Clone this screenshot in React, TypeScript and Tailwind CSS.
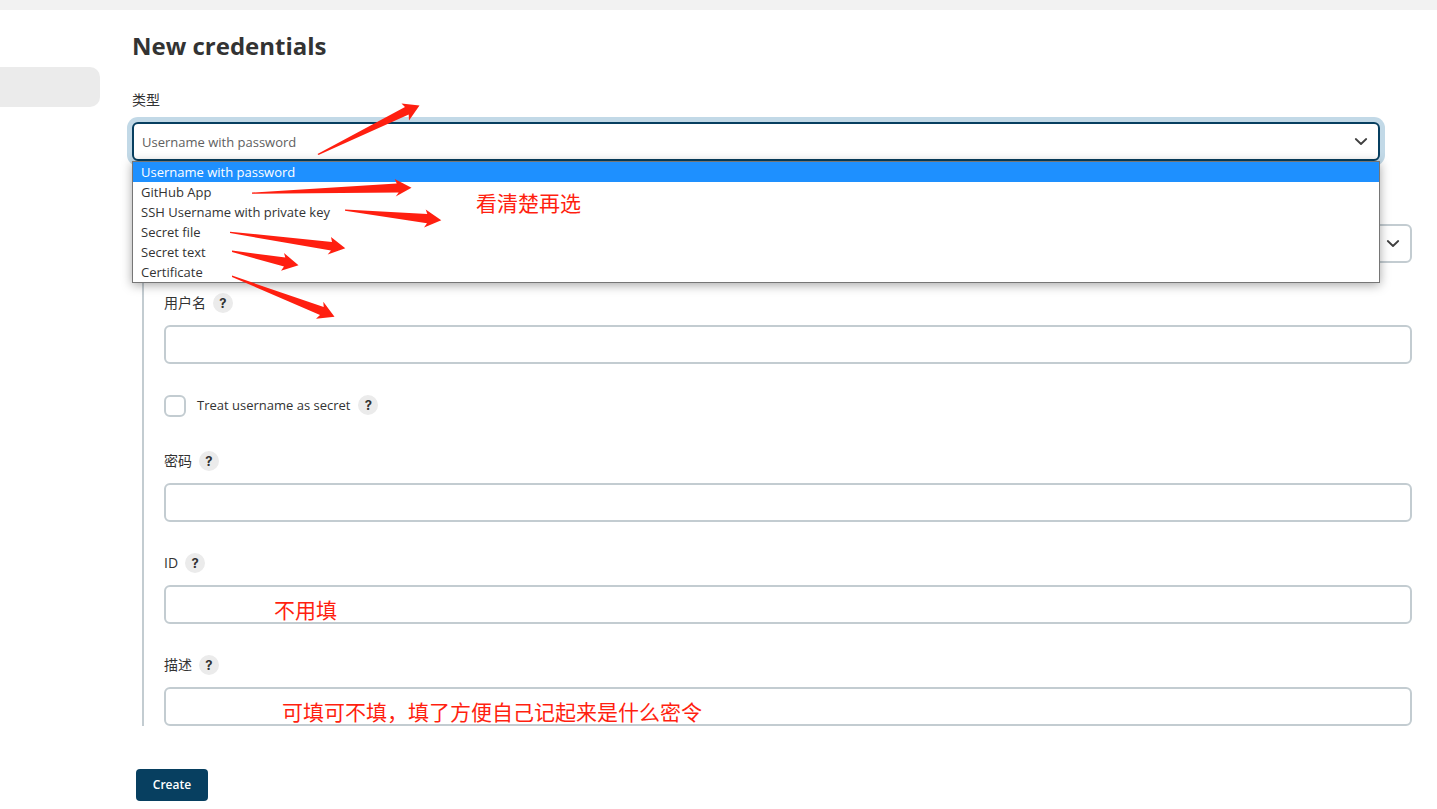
import { useState } from "react";

const CREDENTIAL_TYPES = [
  "Username with password",
  "GitHub App",
  "SSH Username with private key",
  "Secret file",
  "Secret text",
  "Certificate",
];

// tail, upper neck, upper barb, tip, lower barb, lower neck
const ARROWS = [
  "317.5,154 405,107 401.5,103.5 419.5,105.5 409,120.5 408.7,114.5 318.5,155",
  "252,192.6 396.7,183.5 394.7,179 411.5,187.7 395.7,196.5 398.7,192.5 252,193.8",
  "345,209.4 427.3,214 425.7,209.5 441.3,220.3 424,227.5 427,223.2 345,210.8",
  "230,231.7 332,242 331,237 345.3,248.3 327.7,254.5 331,250.5 230,233",
  "232,250.6 285.3,257.5 284,253 298.5,265.3 281,270.8 284,266.5 232,252",
  "232,275.6 323.7,307 323.3,301.8 334.5,316.7 316,318.8 320,315 232,277",
];

const Chevron = () => {
  return (
    <svg
      className="absolute right-3 top-4 pointer-events-none"
      width="14"
      height="8"
      viewBox="0 0 14 8"
      fill="none"
      stroke="#404040"
      strokeWidth="1.8"
      strokeLinecap="round"
      strokeLinejoin="round"
      aria-hidden="true"
    >
      <path d="M1.8 1l5.2 5 5.2-5" />
    </svg>
  );
};

const HelpButton = ({ label }: { label: string }) => {
  return (
    <button
      type="button"
      aria-label={`Help: ${label}`}
      className="flex items-center justify-center size-5 rounded-full bg-[#ebebeb] text-[#333333] font-['Inter',sans-serif] text-[13px] leading-5 font-bold"
    >
      ?
    </button>
  );
};

interface TextFieldProps {
  id: string;
  label: string;
  type?: string;
  note?: string;
  noteClassName?: string;
}

const TextField = ({ id, label, type = "text", note, noteClassName = "" }: TextFieldProps) => {
  const [value, setValue] = useState("");

  return (
    <div className="flex flex-col gap-3">
      <div className="flex items-center gap-[7px] h-5">
        <label htmlFor={id} className="leading-5">
          {label}
        </label>
        <HelpButton label={label} />
      </div>
      <div className="relative">
        <input
          id={id}
          type={type}
          value={value}
          onChange={(e) => setValue(e.target.value)}
          className="block w-full h-[39px] px-2 border-2 border-[#c3ccd1] rounded-md outline-0 bg-white"
        />
        {note && <Note className={`top-[9px] ${noteClassName}`}>{note}</Note>}
      </div>
    </div>
  );
};

const Note = ({ className, children }: { className: string; children: string }) => {
  return (
    <span
      className={`absolute text-[#ff1f10] text-[21px] leading-8 whitespace-nowrap pointer-events-none ${className}`}
    >
      {children}
    </span>
  );
};

const App = () => {
  const [type, setType] = useState(CREDENTIAL_TYPES[0]);
  const [secret, setSecret] = useState(false);

  return (
    <div className="relative min-h-screen bg-white text-[#333333] text-sm font-['Open_Sans','Noto_Sans_CJK_SC',sans-serif]">
      <div className="h-2.5 bg-[#f2f2f2]" />
      <div className="flex">
        <aside className="w-[100px] shrink-0 pt-[57px]">
          <div className="h-10 rounded-r-[10px] bg-[#ebebeb]" />
        </aside>

        <main className="grow min-w-0 pl-8 pr-[25px] pt-5 pb-2">
          <h1 className="text-2xl leading-8 font-bold">New credentials</h1>

          <form onSubmit={(e) => e.preventDefault()}>
            <div className="flex flex-col gap-3 mt-7 mr-8">
              <label htmlFor="type" className="h-5 leading-5">
                类型
              </label>
              <div className="relative">
                <select
                  id="type"
                  value={type}
                  onChange={(e) => setType(e.target.value)}
                  className="block w-full h-[39px] px-2 pt-0.5 appearance-none border-2 border-[#073f60] rounded-md outline-0 bg-white text-[#606060] text-[13px] shadow-[0_0_0_5px_#c2d9e7]"
                >
                  {CREDENTIAL_TYPES.map((name) => (
                    <option key={name}>{name}</option>
                  ))}
                </select>
                <Chevron />
                <ul
                  role="listbox"
                  aria-label="类型"
                  className="absolute z-10 top-full inset-x-0 border border-[#767676] bg-white text-[13px] shadow-[0_2px_10px_rgba(0,0,0,0.35)]"
                >
                  {CREDENTIAL_TYPES.map((name) => (
                    <li
                      key={name}
                      role="option"
                      aria-selected={name === type}
                      onClick={() => setType(name)}
                      className={`h-5 px-2 leading-5 ${name === type ? "bg-[#1e90ff] text-white" : ""}`}
                    >
                      {name}
                    </li>
                  ))}
                </ul>
                <Note className="z-20 left-[344px] top-[65px]">看清楚再选</Note>
              </div>
            </div>

            <div className="mt-[31px] ml-2.5 pl-5 border-l-2 border-[#c3ccd1]">
              <div className="pt-8 mb-[30px]">
                <div className="relative">
                  <select
                    aria-label="Scope"
                    className="block w-full h-[39px] px-2 appearance-none border-2 border-[#c3ccd1] rounded-md outline-0 bg-white"
                  />
                  <Chevron />
                </div>
              </div>

              <div className="flex flex-col gap-[31px]">
                <TextField id="username" label="用户名" />
                <div className="flex items-start h-[25px]">
                  <input
                    id="secret"
                    type="checkbox"
                    checked={secret}
                    onChange={(e) => setSecret(e.target.checked)}
                    className="size-[22px] appearance-none border-2 border-[#c3ccd1] rounded-md bg-white checked:bg-[#073f60]"
                  />
                  <label htmlFor="secret" className="ml-[11px] mr-2 text-[13px] leading-5 font-medium">
                    Treat username as secret
                  </label>
                  <HelpButton label="Treat username as secret" />
                </div>
                <TextField id="password" label="密码" type="password" />
                <TextField id="id" label="ID" note="不用填" noteClassName="left-[110px]" />
                <TextField
                  id="description"
                  label="描述"
                  note="可填可不填，填了方便自己记起来是什么密令"
                  noteClassName="left-[118px]"
                />
              </div>
            </div>

            <button
              type="submit"
              className="block mt-[43px] ml-1 h-8 w-[72px] rounded bg-[#073f60] text-white text-xs font-semibold"
            >
              Create
            </button>
          </form>
        </main>
      </div>

      <svg
        className="absolute z-20 left-0 top-0 pointer-events-none"
        width="460"
        height="330"
        viewBox="0 0 460 330"
        fill="#ff1f10"
        aria-hidden="true"
      >
        {ARROWS.map((points) => (
          <polygon key={points} points={points} />
        ))}
      </svg>
    </div>
  );
};

export default App;
